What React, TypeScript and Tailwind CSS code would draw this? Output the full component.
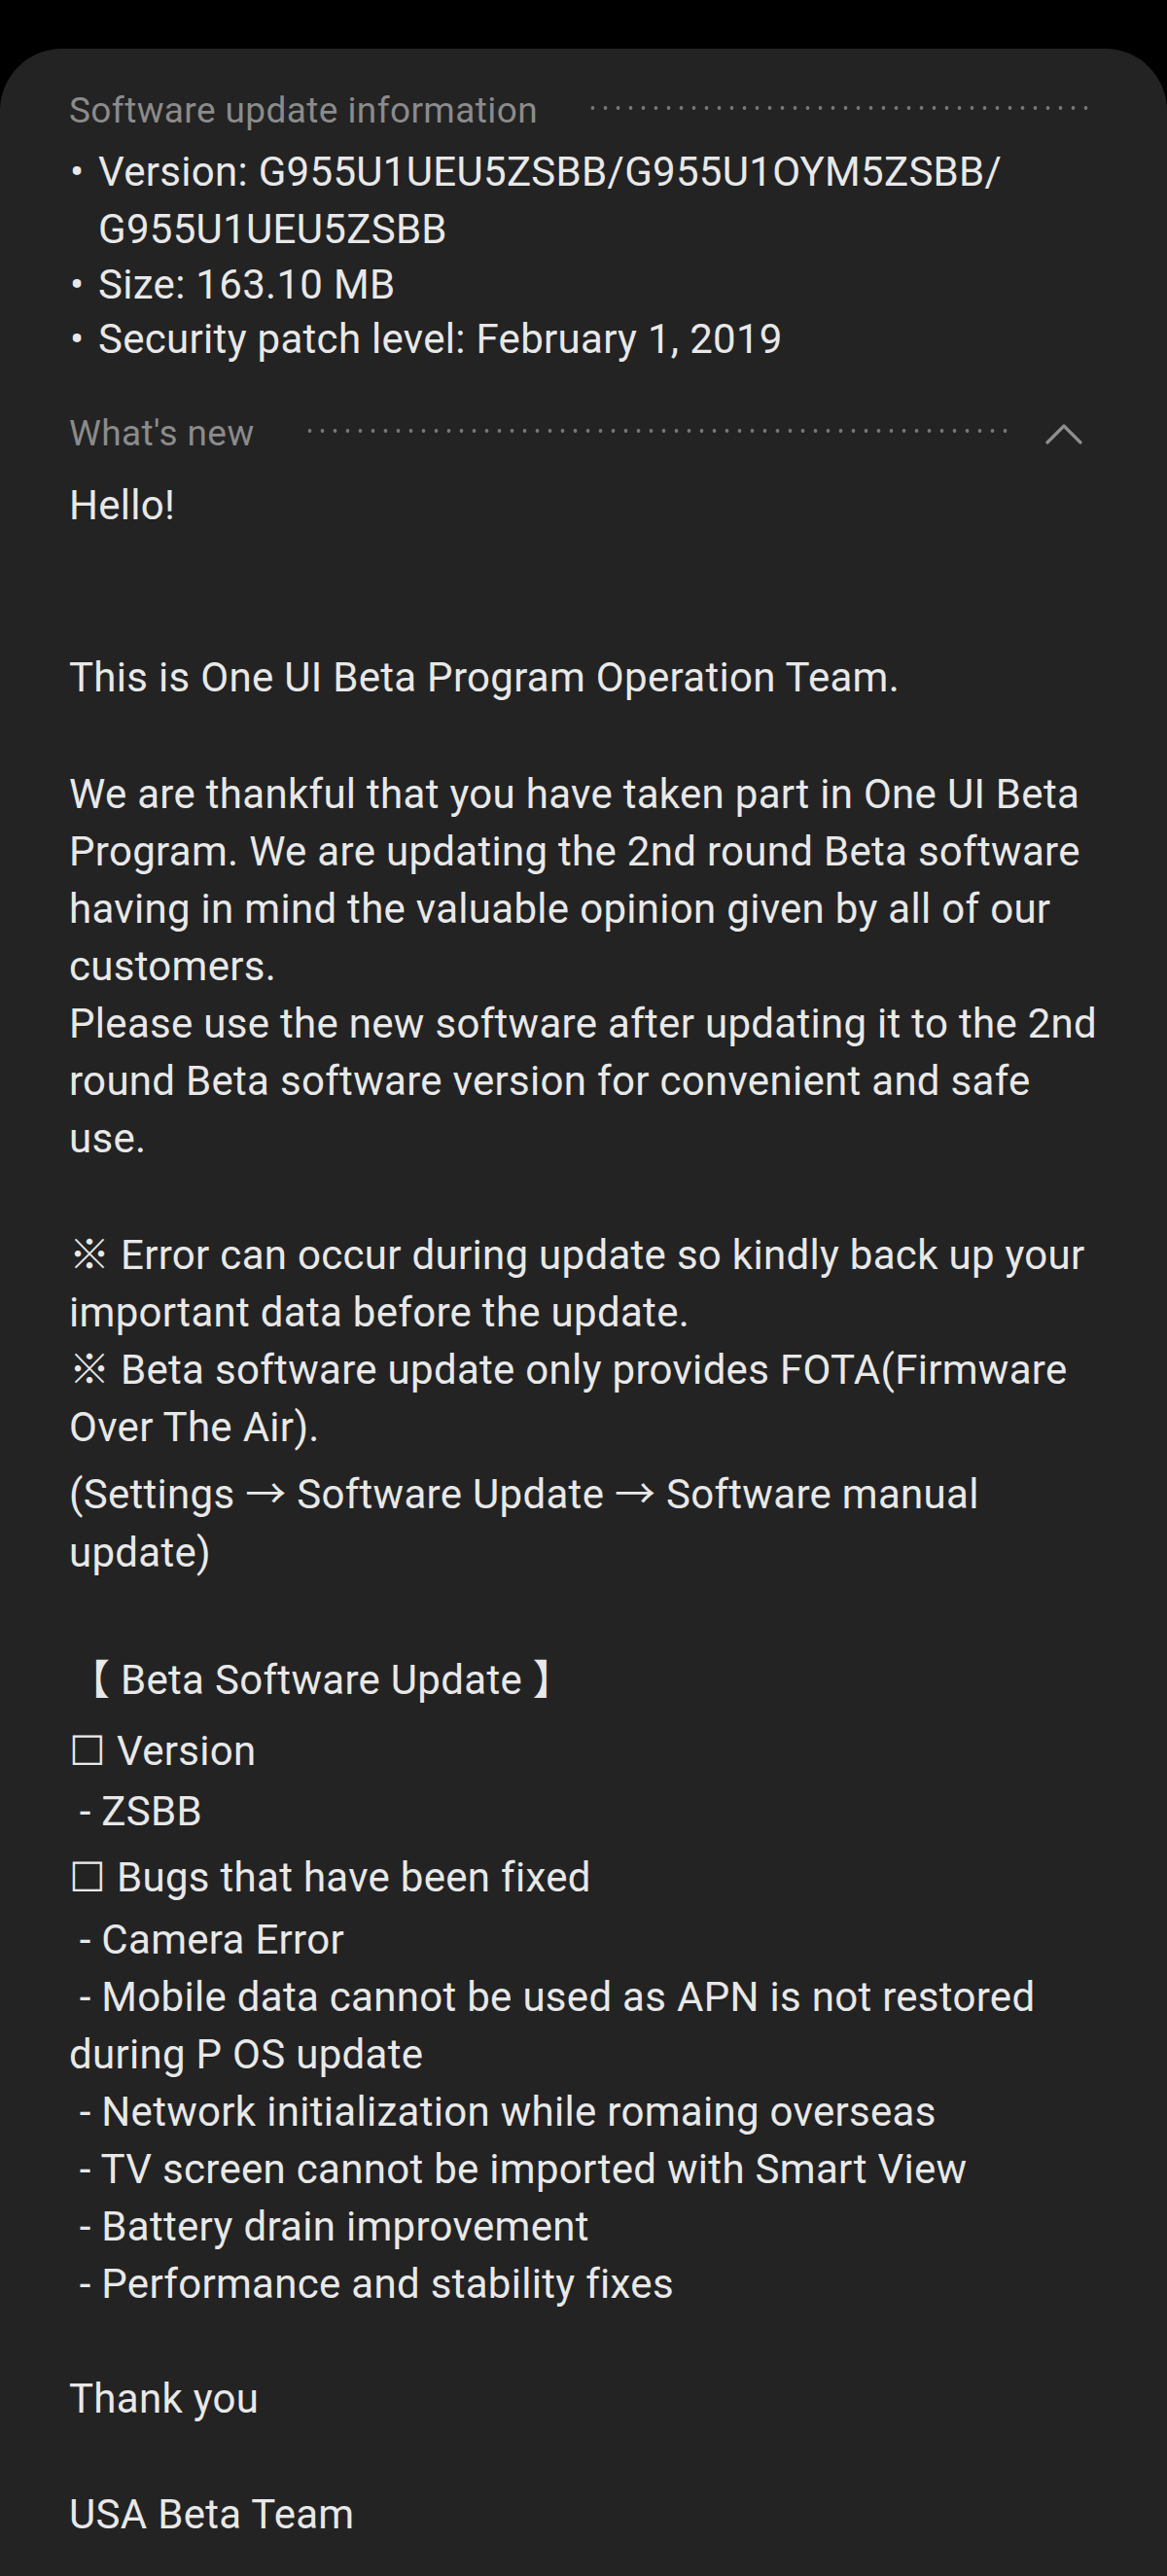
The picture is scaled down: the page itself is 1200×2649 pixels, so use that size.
const body = "font-['Roboto','Noto_Sans_CJK_SC',sans-serif] text-[42px] tracking-[0.3px] leading-[59px] text-[#e8e8e8] whitespace-pre";

function Dots() {
  return (
    <div className="flex-1 h-[4px] bg-[radial-gradient(circle,#767676_1.6px,transparent_2.2px)] bg-size-[13px_4px] bg-repeat-x" />
  );
}

function SectionHeader({ title, chevron, className }: { title: string; chevron?: boolean; className?: string }) {
  return (
    <div className={`flex items-center h-[59px] ${className ?? ""}`}>
      <span className="font-['Roboto',sans-serif] text-[37px] tracking-[0.4px] text-[#8b8b8b] whitespace-nowrap">{title}</span>
      <div className="flex-1 flex items-center ml-[50px] -translate-y-[3px]">
        <Dots />
      </div>
      {chevron && (
        <div className="w-[82px] flex justify-end pr-[8px]">
          <svg width="38" height="22" viewBox="0 0 38 22" fill="none">
            <path d="M2 20 L19 3 L36 20" stroke="#8e8e8e" strokeWidth="3.2" strokeLinecap="round" strokeLinejoin="round" />
          </svg>
        </div>
      )}
    </div>
  );
}

function Bullet({ children, className }: { children: React.ReactNode; className?: string }) {
  return (
    <div className={`flex ${className ?? ""}`}>
      <span className="w-[30px] shrink-0 pl-[1px]">•</span>
      <div>{children}</div>
    </div>
  );
}

export default function App() {
  return (
    <div className="min-h-screen bg-black pt-[50px]">
      <div className="bg-[#232323] rounded-t-[64px] min-h-[2599px] pl-[71px] pr-[79px] pt-[34px] pb-[33px]">
        {/* Software update information */}
        <SectionHeader title="Software update information" />
        <div className={`${body} mt-[4px]`}>
          <Bullet>
            <div>Version: G955U1UEU5ZSBB/G955U1OYM5ZSBB/</div>
            <div>G955U1UEU5ZSBB</div>
          </Bullet>
          <Bullet className="leading-[56px]">Size: 163.10 MB</Bullet>
          <Bullet className="leading-[56px]">Security patch level: February 1, 2019</Bullet>
        </div>

        {/* What's new */}
        <SectionHeader title="What's new" chevron className="mt-[39px]" />
        <div className={body}>
          <p className="mt-[15px]">Hello!</p>
          <p className="mt-[118px]">This is One UI Beta Program Operation Team.</p>
          <div className="mt-[61px]">
            <p>We are thankful that you have taken part in One UI Beta</p>
            <p>Program. We are updating the 2nd round Beta software</p>
            <p>having in mind the valuable opinion given by all of our</p>
            <p>customers.</p>
            <p>Please use the new software after updating it to the 2nd</p>
            <p>round Beta software version for convenient and safe</p>
            <p>use.</p>
          </div>
          <div className="mt-[61px]">
            <p>※ Error can occur during update so kindly back up your</p>
            <p>important data before the update.</p>
            <p>※ Beta software update only provides FOTA(Firmware</p>
            <p>Over The Air).</p>
          </div>
          <div className="mt-[10px] leading-[60px]">
            <p>(Settings → Software Update → Software manual</p>
            <p>update)</p>
          </div>
          <p className="mt-[71px]">【 Beta Software Update 】</p>
          <p className="mt-[14px]">☐ Version</p>
          <p className="mt-[3px]"> - ZSBB</p>
          <p className="mt-[9px]">☐ Bugs that have been fixed</p>
          <p className="mt-[5px]"> - Camera Error</p>
          <p> - Mobile data cannot be used as APN is not restored</p>
          <p>during P OS update</p>
          <p> - Network initialization while romaing overseas</p>
          <p> - TV screen cannot be imported with Smart View</p>
          <p> - Battery drain improvement</p>
          <p> - Performance and stability fixes</p>
          <p className="mt-[59px]">Thank you</p>
          <p className="mt-[60px]">USA Beta Team</p>
        </div>
      </div>
    </div>
  );
}
